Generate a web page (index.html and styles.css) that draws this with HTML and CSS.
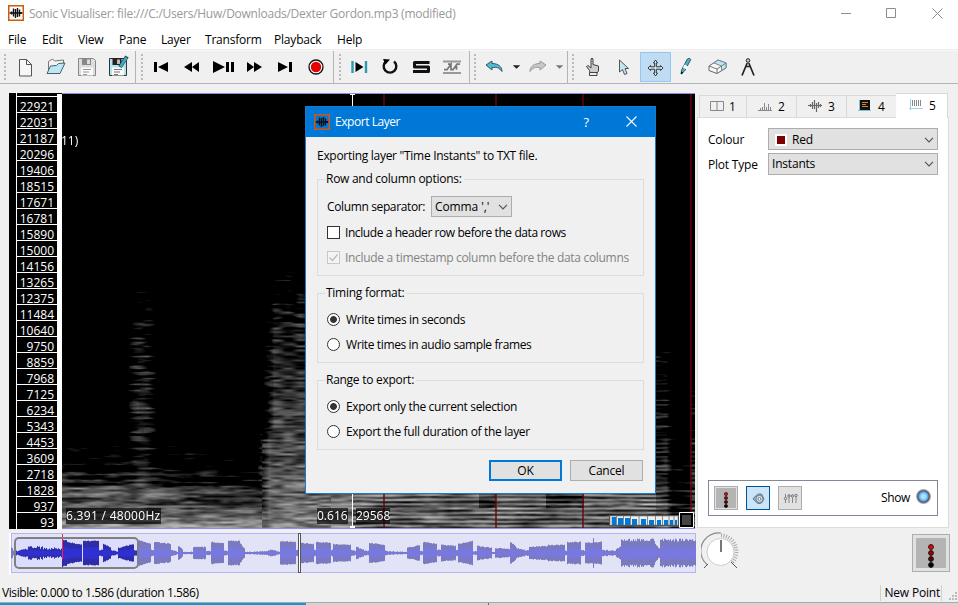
FILE: index.html
```html
<!DOCTYPE html>
<html lang="en">
<head>
<meta charset="utf-8">
<title>Sonic Visualiser</title>
<link rel="stylesheet" href="styles.css">
</head>
<body>
<svg width="0" height="0" class="defs">
  <symbol id="logo" viewBox="0 0 16 16"><path d="M1.500 8h13M3.500 6.500v3M5.500 3.500v8M7.500 4v9M9.500 3v9M11.500 4.500v7M13 7v2" stroke="#111" stroke-width="1.400" fill="none"/><rect x=".75" y=".75" width="14.500" height="14.500" fill="none" stroke="#d4570c" stroke-width="1.500"/></symbol>
  <symbol id="chev" viewBox="0 0 10 6"><path d="M1 .8l4 4 4-4" fill="none" stroke="#555" stroke-width="1.200"/></symbol>
  <symbol id="lights" viewBox="0 0 30 30"><rect width="30" height="30" rx="1" fill="#b4b4b4"/><g stroke="#111"><circle cx="15" cy="9" r="2.400" fill="#f00"/><circle cx="15" cy="15" r="2.400" fill="#a00"/><circle cx="15" cy="21" r="2.400" fill="#600"/><circle cx="15" cy="27" r="2.400" fill="#000"/></g></symbol>
</svg>
<header class="titlebar">
  <svg class="logo"><use href="#logo"/></svg>
  <span class="title">Sonic Visualiser: file:///C:/Users/Huw/Downloads/Dexter Gordon.mp3 (modified)</span>
  <svg class="winbtns" viewBox="0 0 102 12"><path d="M0 6.500h10M45.500 1.500h9v9h-9zM91.500 1.500l10 10M101.500 1.500l-10 10" fill="none" stroke="#8c8c8c"/></svg>
</header>
<nav class="menu"><span>File</span><span>Edit</span><span>View</span><span>Pane</span><span>Layer</span><span>Transform</span><span>Playback</span><span>Help</span></nav>
<div class="toolbar">
  <div class="group g1"><i class="grip"></i>
    <svg class="tool" viewBox="0 0 31 30"><path d="M10.500 7.500h7l5 5v11.500h-12z" fill="#f7f7f7" stroke="#555"/><path d="M17.500 7.500v5h5" fill="none" stroke="#555"/></svg>
    <svg class="tool" viewBox="0 0 31 30"><path d="M8.500 22V9.500l4-2.500 2 2 9-1v6" fill="#f4f4f4" stroke="#777"/><path d="M7 21.500l3.500-7.500 6-.5 2-2 6.500-.5-5 10.500z" fill="#bfe6f2" stroke="#3c6470"/></svg>
    <svg class="tool" viewBox="0 0 31 30"><path d="M7.500 6.500h15l2 2v15h-17z" fill="#ddd" stroke="#888"/><path d="M11 6h9v7h-9z" fill="#888"/><path d="M16 7.500h3V12h-3z" fill="#ddd"/><path d="M10 15.500h12v8H10z" fill="#fafafa"/><path d="M12 17.500h8M12 20h6M12 22.500h4" stroke="#999"/></svg>
    <svg class="tool" viewBox="0 0 31 30"><path d="M7.500 6.500h15l2 2v15h-17z" fill="#b5e2ef" stroke="#333"/><path d="M10.500 6h9v7h-9z" fill="#222"/><path d="M15 7.500h3V12h-3z" fill="#bbb"/><path d="M10 15.500h12v8H10z" fill="#fafafa"/><path d="M12 17.500h8M12 20h6M12 22.500h4" stroke="#777"/><path d="M18 15l7-10.500" stroke="#345" stroke-width="4"/><path d="M18.500 14.500l6-9" stroke="#39aecb" stroke-width="2.500"/></svg>
  </div>
  <div class="group g2"><i class="grip"></i>
    <svg class="tool" viewBox="0 0 31 30"><path d="M8 10h3v10H8zM22 10v10l-10-5z"/></svg>
    <svg class="tool" viewBox="0 0 31 30"><path d="M15 10v10l-8-5zM22 10v10l-7-5z"/></svg>
    <svg class="tool" viewBox="0 0 31 30"><path d="M5 9v12l12-6zM18 10h3v10h-3zM23 10h3v10h-3z"/></svg>
    <svg class="tool" viewBox="0 0 31 30"><path d="M8 10v10l7-5zM15 10v10l8-5z"/></svg>
    <svg class="tool" viewBox="0 0 31 30"><path d="M8 10v10l10-5zM19 10h3v10h-3z"/></svg>
    <svg class="tool" viewBox="0 0 31 30"><circle cx="15" cy="15" r="7" fill="#fff" stroke="#111" stroke-width="1.300"/><circle cx="15" cy="15" r="5.200" fill="#e60000"/></svg>
  </div>
  <div class="group g3"><i class="grip"></i>
    <svg class="tool" viewBox="0 0 31 30"><path d="M8.500 9v12M22 9v12" stroke="#2d9ab5" stroke-width="2.400"/><path d="M11.500 10v10l8-5z"/></svg>
    <svg class="tool" viewBox="0 0 31 30"><path d="M19 9.500a6.300 6.300 0 1 1-8 0" fill="none" stroke="#111" stroke-width="2.400"/><path d="M8 7l7 .5-4.500 5z"/></svg>
    <svg class="tool" viewBox="0 0 31 30"><path d="M23.500 10.500H8.500v4.500h14v4.500H7" fill="none" stroke="#111" stroke-width="3" stroke-linejoin="round"/></svg>
    <svg class="tool" viewBox="0 0 31 30"><path d="M6 9.500h18M6 21h18" stroke="#999" stroke-width="2"/><path d="M7 17.700h3l4-5.500v5.500h2l4-5.500h3M11 12.200h3M19.500 12.200v5.500" fill="none" stroke="#777" stroke-width="1.700"/></svg>
  </div>
  <div class="group g4"><i class="grip"></i>
    <svg class="tool" viewBox="0 0 31 30"><path d="M7 13l6-4v2.500c6 0 10 3 10 8-3-4-5-4.500-10-4v2.500z" fill="#4dbbd5" stroke="#35565f"/></svg>
    <svg class="drop" viewBox="0 0 14 30"><path d="M3 13h8l-4 4z" fill="#222"/></svg>
    <svg class="tool" viewBox="0 0 31 30"><path d="M23 13l-6-4v2.500c-6 0-10 3-10 8 3-4 5-4.500 10-4v2.500z" fill="#c8c8c8" stroke="#999"/></svg>
    <svg class="drop" viewBox="0 0 14 30"><path d="M2 13h8l-4 4z" fill="#777"/></svg>
  </div>
  <div class="group g5"><i class="grip"></i>
    <svg class="tool" viewBox="0 0 31 30"><path d="M11.500 18.500l-3-4 1.500-1 3 2.500V7q1-2 2 0v5.500l5.500 1.500v5l-1.500 2h-7z" fill="#ccc" stroke="#444"/><path d="M11.500 20.500h7.500v3h-7.500z" fill="#eee" stroke="#444"/></svg>
    <svg class="tool" viewBox="0 0 31 30"><path d="M10.500 8v12l3-2.500 2 5 2.500-1-2-5h3.500z" fill="#bfe6f2" stroke="#555"/></svg>
    <svg class="tool active" viewBox="0 0 31 30"><path d="M15.500 8l2 3h-1.200v3.800h4.200v-1.300l2.500 2.500-2.500 2.500v-1.300h-4.200V21h1.200l-2 3-2-3h1.200v-3.800h-4.200v1.300L8 16l2.500-2.500v1.300h4.200V11h-1.200z" fill="#d5eef8" stroke="#333"/></svg>
    <svg class="tool" viewBox="0 0 31 30"><path d="M10 22l.6-4 5.700-11q2-1.500 3.500.5l-6 11.200z" fill="#46b4d0" stroke="#456"/><path d="M13.500 12.500l3.500 2-1.500 3-3.500-2z" fill="#fff"/><path d="M10 22.500l.5-3 2 1.200z"/></svg>
    <svg class="tool" viewBox="0 0 31 30"><path d="M7 14l9-6 8 3v5l-9 5.500-8-3z" fill="#f8f8f8" stroke="#666"/><path d="M12 11l4-3 8 3v5l-4.500 2.500v-4.500z" fill="#bfe6f2" stroke="#789"/><path d="M7 14l8 3 9-6M15 17v4" fill="none" stroke="#777"/></svg>
    <svg class="tool" viewBox="0 0 31 30"><circle cx="15" cy="8.500" r="1.800" fill="#ccc" stroke="#222"/><path d="M14.200 11L9 23.500M15.800 11L21 23.500M12.500 14.500h5" fill="none" stroke="#222" stroke-width="1.700"/></svg>
  </div>
</div>
<main class="work">
  <section class="left">
    <div class="pane">
      <div class="gutter"></div>
      <div class="scale" id="scale"></div>
      <div class="strip"></div>
      <div class="spectro">
        <canvas id="spec" width="633" height="436"></canvas>
        <span class="lbl paren">11)</span>
        <span class="lbl hz">6.391 / 48000Hz</span><span class="lbl t1">0.616</span><span class="lbl t2">29568</span>
        <svg class="thumb" viewBox="0 0 86 16"><rect x=".5" y="3.500" width="69" height="10" fill="#ccc" stroke="#555"/><path d="M3 5h65v7H3z" fill="#eee"/><path d="M3 5h4v8H3zM9 6h5v7H9zM16 6h5v7h-5zM23 7h5v6h-5zM32 7h5v6h-5zM40 8h5v5h-5zM48 8h4v5h-4zM55 8h4v5h-4zM61 8h3v5h-3zM66 8h2v5h-2z" fill="#0078d7"/><path d="M7.500 4v9M14.500 4v9M21.500 4v9M30 4v9M38.500 4v9M46.500 4v9M53.500 4v9M60 4v9M65 4v9" stroke="#888"/><path d="M70.500.5h14v15h-14z" fill="none" stroke="#fff"/><path d="M72 2h11v12H72z" fill="#444" stroke="#000" stroke-width="2"/></svg>
      </div>
    </div>
    <div class="overview"><canvas id="wave" width="687" height="42"></canvas><i class="viewbox"></i><i class="playpos"></i></div>
  </section>
  <aside class="side">
    <div class="tabs">
      <div class="tab"><svg viewBox="0 0 14 12"><path d="M.5 1.500h13v9H.5zM7 1.500v9" fill="none" stroke="#888"/></svg>1</div>
      <div class="tab"><svg viewBox="0 0 14 12"><path d="M0 10.500h14M2.500 8v2M4.500 7v3M6.500 3v7M8.500 7v3M10.500 4v6M12.500 7v3" stroke="#888"/></svg>2</div>
      <div class="tab"><svg viewBox="0 0 14 12"><path d="M0 5.500h14M2.500 4v3M4.500 2v7M6.500 0v9M8.500 3v9M10.500 2v6M12.500 4v3" stroke="#666" stroke-width="1.200"/></svg>3</div>
      <div class="tab"><svg viewBox="0 0 14 12"><path d="M1 0h11v10H1z" fill="#111"/><path d="M4 2.500h6M4 4.500h4M4 6.500h6" stroke="#d8832c"/><path d="M1.500 0v11M0 10.500h13" stroke="#7ac4dc"/></svg>4</div>
      <div class="tab on"><svg viewBox="0 0 14 12"><path d="M3.500 1v6M5.500 1v6M7.500 1v6M9.500 1v6M11.500 1v6" stroke="#888"/><path d="M1.500 0v11M0 9.500h14" stroke="#9cd4e6"/></svg>5</div>
    </div>
    <div class="panel">
      <div class="field"><span>Colour</span><div class="combo first"><i class="swatch"></i>Red<svg class="chev"><use href="#chev"/></svg></div></div>
      <div class="field"><span class="pt">Plot Type</span><div class="combo">Instants<svg class="chev"><use href="#chev"/></svg></div></div>
      <div class="playbox">
        <div class="pb"><svg viewBox="0 0 30 30"><use href="#lights"/></svg></div>
        <div class="pb sel"><svg viewBox="0 0 20 20"><path d="M5 11l2.500-3 3-2h3l2.500 5-2.500 4-3.500.5z" fill="#9db8c6" stroke="#678"/><circle cx="11.500" cy="11" r="3.600" fill="#dbe9f0" stroke="#678"/><circle cx="11.500" cy="11" r="1.500" fill="#fff" stroke="#678"/></svg></div>
        <div class="pb"><svg viewBox="0 0 20 20"><path d="M5.500 6v9M9 6v9M12.500 6v9M16 6v9" stroke="#888"/><g fill="#ddd" stroke="#777"><circle cx="5.500" cy="10.500" r="1.200"/><circle cx="9" cy="8" r="1.200"/><circle cx="12.500" cy="8" r="1.200"/><circle cx="16" cy="7.500" r="1.200"/></g></svg></div>
        <span class="show">Show</span><i class="led"></i>
      </div>
    </div>
    <div class="controls">
      <svg class="dial" viewBox="0 0 40 40"><path d="M6 32.500A18 18 0 0 1 20 1" fill="none" stroke="#888" stroke-width="1.200"/><path d="M20 3.500A16 16 0 0 1 31 30.500" fill="none" stroke="#aaa" stroke-width="4" stroke-dasharray="1 1.500"/><path d="M3 36l4-4M36 36l-6-6" stroke="#555"/><circle cx="19.500" cy="20" r="13.500" fill="#fff" stroke="#ccc"/><path d="M20 8v12" stroke="#777" stroke-width="2"/></svg>
      <div class="mixer"><svg viewBox="0 0 30 30"><use href="#lights"/></svg></div>
    </div>
  </aside>
</main>
<footer class="status"><span class="vis">Visible: 0.000 to 1.586 (duration 1.586)</span><span class="np">New Point</span><svg class="size" viewBox="0 0 9 9"><path d="M6 0h2v2H6zM3 3h2v2H3zM6 3h2v2H6zM0 6h2v2H0zM3 6h2v2H3zM6 6h2v2H6z" fill="#bbb"/></svg></footer>
<div class="under"><i class="blue"></i><i class="tick"></i></div>

<div class="dialog">
  <div class="dtitle"><svg class="logo"><use href="#logo"/></svg><span>Export Layer</span><b>?</b><svg class="x" viewBox="0 0 11 11"><path d="M.5.5l10 10M10.500.5l-10 10" stroke="#fff" stroke-width="1.100"/></svg></div>
  <p class="intro">Exporting layer "Time Instants" to TXT file.</p>
  <fieldset class="f1"><legend class="lg1">Row and column options:</legend>
    <div class="sep"><span>Column separator:</span><div class="combo">Comma ','<svg class="chev"><use href="#chev"/></svg></div></div>
    <label class="chk c1"><i></i><span>Include a header row before the data rows</span></label>
    <label class="chk off c2"><i><svg viewBox="0 0 11 11"><path d="M1.500 5.500l3 3 5-6" fill="none" stroke="#bbb" stroke-width="1.300"/></svg></i><span>Include a timestamp column before the data columns</span></label>
  </fieldset>
  <fieldset class="f2"><legend>Timing format:</legend>
    <label class="rad on"><i></i><span>Write times in seconds</span></label><label class="rad"><i></i><span class="r2">Write times in audio sample frames</span></label>
  </fieldset>
  <fieldset class="f3"><legend>Range to export:</legend>
    <label class="rad on"><i></i><span>Export only the current selection</span></label><label class="rad"><i></i><span>Export the full duration of the layer</span></label>
  </fieldset>
  <div class="buttons"><div class="btn ok">OK</div><div class="btn">Cancel</div></div>
</div>
<script src="app.js"></script>
</body>
</html>
```
FILE: styles.css
```css
* { box-sizing: border-box; }
body { margin: 0; width: 958px; height: 605px; overflow: hidden; display: flex; flex-direction: column; background: #f0f0f0; font: 12px/16px "Open Sans", "Noto Sans", sans-serif; letter-spacing: -0.2px; color: #000; white-space: nowrap; }
i { display: block; font-style: normal; }
svg, canvas { display: block; flex: none; }
.defs { position: absolute; }
.titlebar { height: 29px; flex: none; background: #fff; display: flex; align-items: center; padding: 0 15px 3px 8px; color: #999; }
.logo { width: 16px; height: 16px; }
.title { margin: 2px 0 0 5px; flex: 1; letter-spacing: -.255px; }
.winbtns { width: 102px; height: 12px; }
.menu { height: 21px; flex: none; background: #fff; border-bottom: 1px solid #ececec; padding: 3px 0 0 8px; display: grid; grid-template-columns: 34px 36px 41px 42px 44px 69px 63px auto; }
.toolbar { height: 34px; flex: none; display: flex; border-bottom: 1px solid #b4b4b4; border-top: 1px solid #f8f8f8; }
.group { display: flex; align-items: center; border-right: 1px solid #b4b4b4; }
.g1 { width: 136px; padding-left: 4px; }
.g2 { width: 198px; padding-left: 5px; }
.g3 { width: 136px; padding-left: 5px; }
.g4 { width: 98px; padding-left: 4px; }
.g5 { flex: 1; border: 0; padding-left: 4px; }
.grip { width: 2px; height: 27px; margin-right: 3px; background: repeating-linear-gradient(#bbb 0 2px, transparent 2px 4px); }
.g5 .grip { margin-right: 4px; }
.tool { width: 31px; height: 30px; }
.drop { width: 13px; height: 30px; }
.active { background: #c0dcf3; outline: 1px solid #90c8f6; outline-offset: -1px; }
.work { display: flex; height: 500px; flex: none; padding: 9px 0 0 9px; }
.left { width: 688px; }
.pane { display: flex; height: 436px; background: #000; width: 686px; }
.gutter { width: 7px; }
.scale { width: 41px; border-left: 1px solid #fff; padding-top: 3px; color: #fff; letter-spacing: 0; }
.scale div { height: 16px; border-top: 1px solid #fff; text-align: right; padding-right: 3px; line-height: 19px; }
.strip { width: 5px; background: #fff; margin-top: 1px; }
.spectro { position: relative; width: 633px; border-top: 1px solid #8c8cf0; border-bottom: 1px solid #8c8cf0; overflow: hidden; }
.lbl { position: absolute; color: #fff; background: rgba(0,0,0,.65); line-height: 16px; letter-spacing: 0; }
.paren { left: -1px; top: 39px; }
.hz { left: 4px; top: 414px; letter-spacing: .3px; }
.t1 { left: 255px; top: 414px; }
.t2 { left: 294px; top: 414px; }
.thumb { position: absolute; left: 547px; top: 418px; width: 86px; height: 16px; }
.overview { position: relative; margin-top: 4px; width: 688px; height: 42px; }
.viewbox { position: absolute; left: 5px; top: 4px; width: 125px; height: 32px; border: 2px solid #808080; border-radius: 5px; }
.playpos { position: absolute; left: 289px; top: 0; width: 3px; height: 40px; border: 1px solid #555; background: #fff; }
.side { width: 252px; }
.tabs { display: flex; height: 24px; align-items: flex-end; padding-left: 2px; }
.tab { width: 50px; height: 22px; border: 1px solid #d9d9d9; border-left-width: 0; border-bottom: 0; display: flex; align-items: center; gap: 6px; padding: 0 0 0 11px; }
.tab:first-child { border-left-width: 1px; width: 48px; padding-left: 10px; gap: 5px; }
.tab svg { width: 14px; height: 12px; margin-top: -1px; }
.tab.on { width: 52px; height: 25px; background: #fff; padding: 0 0 1px 13px; z-index: 1; margin: 0 0 -1px -1px; }
.tab.on svg { margin-top: -2px; }
.panel { height: 411px; background: #fff; border: 1px solid #dcdcdc; padding: 10px 10px 11px; display: flex; flex-direction: column; gap: 3px; }
.field { display: flex; height: 22px; align-items: center; }
.field > span { width: 60px; margin-top: 2px; }
.combo { display: flex; align-items: center; background: #e1e1e1; border: 1px solid #adadad; height: 22px; padding: 0 3px; }
.combo.first { padding-top: 1px; }
.field .combo { flex: 1; }
.chev { width: 10px; height: 6px; margin-left: auto; }
.swatch { width: 12px; height: 12px; background: #7f0000; border: 2px solid #fff; margin: 0 5px 0 3px; outline: 1px solid #fff; outline-offset: -1px; }
.playbox { margin-top: auto; height: 36px; border: 1px solid #82879a; display: flex; align-items: center; padding: 0 6px 0 5px; gap: 8px; }
.pb { width: 24px; height: 24px; border: 1px solid #adadad; background: #e1e1e1; padding: 1px; }
.pb.sel { border-color: #005499; background: #cce4f7; }
.pb svg { width: 20px; height: 20px; }
.show { margin-left: auto; letter-spacing: -.35px; }
.led { width: 15px; height: 15px; margin: -3px 0 0 -2px; border-radius: 50%; background: radial-gradient(circle at 50% 50%, #aee0ff 0 2px, #4aabf5 4.500px, #556 5.500px, #bbb 7.500px); }
.controls { display: flex; justify-content: space-between; padding: 4px 0 0 4px; align-items: flex-start; margin-right: -1px; }
.dial { width: 40px; height: 40px; }
.mixer { width: 38px; height: 38px; margin-top: 2px; border: 1px solid #adadad; background: #e1e1e1; padding: 3px; }
.mixer svg { width: 30px; height: 30px; }
.status { height: 18px; flex: none; display: flex; padding: 0 0 0 2px; align-items: center; }
.vis { letter-spacing: -.42px; }
.np { margin-left: auto; border-left: 1px solid #d0d0d0; border-right: 1px solid #d0d0d0; padding: 0 1px 0 4px; }
.size { width: 9px; height: 9px; margin: 6px 0 0 7px; }
.under { height: 3px; flex: none; background: #d4d4d4; border-top: 1px solid #a8a8a8; display: flex; }
.blue { width: 306px; background: #0a9ad8; }
.tick { width: 1px; margin-left: 182px; background: #1685bb; }

.dialog { position: absolute; left: 305px; top: 106px; width: 351px; height: 388px; border: 1px solid #1979ca; background: #f0f0f0; display: flex; flex-direction: column; }
.dtitle { height: 30px; background: #0078d7; color: #fff; display: flex; align-items: center; padding: 0 18px 0 8px; }
.dtitle span { margin: -1px 0 0 5px; flex: 1; letter-spacing: -.45px; }
.dtitle b { font-weight: 400; font-size: 13px; margin: -1px 37px 0 0; }
.dtitle .x { width: 11px; height: 11px; margin-top: -2px; }
.intro { margin: 11px 0 0 11px; letter-spacing: -.29px; }
fieldset { margin: 7px 11px 0; padding: 0; border: 1px solid #dcdcdc; width: 327px; min-width: 0; }
legend { margin-left: 7px; padding: 0 2px 0 1px; height: 16px; letter-spacing: -.27px; }
.f1 { height: 105px; }
.f2, .f3 { height: 78px; margin-top: 9px; }
.sep { display: flex; align-items: center; padding: 9px 0 0 9px; }
.sep span { width: 104px; letter-spacing: -.37px; }
.sep .combo { width: 81px; height: 21px; letter-spacing: -.1px; }
.chk, .rad { display: flex; align-items: center; height: 25px; padding-left: 9px; letter-spacing: -.34px; }
.chk { gap: 5px; }
.c1 { margin-top: 3px; letter-spacing: -.42px; }
.c2 { letter-spacing: -.31px; }
.chk i { width: 13px; height: 13px; border: 1px solid #333; background: #fff; }
.off { color: #838383; }
.off i { border-color: #c8c8c8; background: #f4f4f4; }
.off svg { width: 11px; height: 11px; }
.rad { gap: 6px; }
.r2 { letter-spacing: -.38px; }
legend + .rad { margin-top: 6px; }
.rad i { width: 13px; height: 13px; border: 1px solid #333; border-radius: 50%; background: #fff; }
.rad.on i { background: radial-gradient(circle, #333 0 3px, #fff 3.800px); }
.buttons { display: flex; justify-content: flex-end; gap: 8px; margin: 10px 12px 0 0; }
.btn { width: 73px; height: 21px; border: 1px solid #adadad; background: #e1e1e1; text-align: center; line-height: 20px; }
.ok { border: 2px solid #0078d7; line-height: 18px; }
```
FILE: app.js
```js
// Frequency scale
[22921,22031,21187,20296,19406,18515,17671,16781,15890,15000,14156,13265,12375,11484,10640,9750,8859,7968,7125,6234,5343,4453,3609,2718,1828,937,93].forEach(function (f) {
  var d = document.createElement('div');
  d.textContent = f;
  document.getElementById('scale').appendChild(d);
});

function hash(x, y) {
  var h = Math.imul(x, 374761393) + Math.imul(y, 668265263) | 0;
  h = Math.imul(h ^ (h >>> 13), 1274126177);
  return ((h ^ (h >>> 16)) >>> 0) / 4294967295;
}
function noise(x, y) {
  var i = Math.floor(x), j = Math.floor(y), u = x - i, v = y - j;
  u = u * u * (3 - 2 * u);
  var a = hash(i, j) * (1 - u) + hash(i + 1, j) * u;
  var b = hash(i, j + 1) * (1 - u) + hash(i + 1, j + 1) * u;
  return a * (1 - v) + b * v;
}
// Piecewise linear lookup over [position, value] pairs
function ramp(p, t) {
  if (t <= p[0][0]) return p[0][1];
  for (var k = 1; k < p.length; k++) {
    if (t < p[k][0]) return p[k-1][1] + (p[k][1] - p[k-1][1]) * (t - p[k-1][0]) / (p[k][0] - p[k-1][0]);
  }
  return p[p.length - 1][1];
}
var OX = 62, OY = 94;
var quiet = [[430,-.5],[448,-.14],[466,-.08],[472,.08],[484,.06],[488,.32],[493,.4],[498,.25],[512,.36],[520,.5],[528,.58]];
var pulse = [[245,-.4],[290,-.16],[325,0],[360,.09],[400,.12],[440,.1],[470,.17],[490,.32],[528,.5]];
var onset = [[255,-.35],[290,-.08],[320,.08],[370,.17],[420,.25],[470,.34],[500,.42],[528,.52]];
var tail = [[330,-.5],[355,-.05],[450,.08],[470,.14],[500,.28],[528,.42]];
var c = document.getElementById('spec').getContext('2d');
var img = c.createImageData(633, 436);
for (var py = 0; py < 436; py++) for (var px = 0; px < 633; px++) {
  var x = px + OX, y = py + OY, b, n;
  n = noise(x / (x < 262 ? 19 : x > 330 ? 24 : 12), y / 2) * .74 + noise(x / 7 + 90, y / 1.6 + 50) * .26;
  var edge = y > 430 ? 266 : 271;
  b = -1;
  if (x < 280) {
    var w = Math.max(0, 1 - Math.abs(x - 142) / 14);
    b = ramp(quiet, y) - Math.max(0, (x - 150) / 110) * (y < 487 ? .2 : y < 510 ? .16 : .05);
    if (w > 0) b = Math.max(b, ramp(pulse, y) - (1 - w) * (1 - w) * .3);
  }
  if (x >= 258 && x < 656) {
    b = Math.max(b, ramp(onset, y) - Math.max(0, edge + 3 - x) * .04);
    if (x > 352) {
      b = y < 480 ? -1 : .38 + Math.sin(y * 1.45) * .15;
      if (y < 508 && (x > 478 && x < 496 || x > 545 && x < 584)) b -= .2;
    }
  } else if (x >= 656) {
    b = ramp(tail, y) + Math.sin(y * 1.45) * .11;
    b -= Math.max(0, Math.min(.3, (x - 666) * .05));
    if (x > 689 && y > 390) b += .2;
  }
  var g = Math.max(0, Math.min(.74, b + (n - .5) * (b < .1 ? .72 : .54))) * 255;
  var o = (py * 633 + px) * 4;
  img.data[o] = img.data[o+1] = img.data[o+2] = g;
  img.data[o+3] = 255;
}
c.putImageData(img, 0, 0);
c.fillStyle = 'rgba(110,0,8,.7)';
[383, 495, 582, 690].forEach(function (m) { c.fillRect(m - OX, 0, 2, 436); });
c.fillStyle = '#fff';
c.fillRect(352 - OX, 0, 1, 436);
c.fillRect(350 - OX, 432, 5, 3);
c.fillRect(350 - OX, 0, 5, 1);

// Overview: [start, end, peak at start, peak at end]
var seg = [[11,13,6,3],[13,17,2,3],[17,28,2,5],[28,62,6,4],[62,67,14,12],[67,82,11,8],[83,99,12,12],[99,103,3,3],[103,111,9,5],[111,118,3,1],[118,134,5,9],[134,139,3,2],[139,151,13,9],[151,154,3,3],[154,171,11,9],[171,178,3,1],[178,183,7,3],[183,193,1,1],[193,206,6,6],[206,211,2,2],[211,224,11,10],[224,228,2,2],[228,240,12,12],[240,245,10,3],[245,268,1,2],[268,276,3,3],[276,280,2,1],[280,296,12,11],[296,301,3,2],[301,314,10,9],[314,316,3,3],[316,331,11,10],[331,333,3,3],[333,351,9,8],[351,356,3,2],[356,364,6,3],[364,369,2,2],[369,385,10,8],[385,407,2,1],[407,420,5,8],[420,423,2,2],[423,437,11,9],[437,441,3,3],[441,456,8,7],[456,458,3,3],[458,473,9,12],[473,477,2,2],[477,492,7,5],[492,495,1,1],[495,510,5,4],[510,516,11,6],[516,529,5,2],[529,548,6,7],[548,565,8,8],[565,567,2,2],[567,581,11,11],[581,585,3,2],[585,602,10,11],[602,616,3,2],[616,621,4,8],[621,655,13,13],[655,660,8,3],[660,697,13,13]];
var wv = document.getElementById('wave').getContext('2d');
wv.fillStyle = '#fff'; wv.fillRect(0, 0, 2, 42);
wv.fillStyle = '#e3e3f7'; wv.fillRect(2, 0, 685, 40);
wv.strokeStyle = '#b4b4f5'; wv.strokeRect(2.5, .5, 684, 39);
wv.fillStyle = '#dcdcff'; wv.fillRect(6, 6, 123, 29);
seg.forEach(function (s) {
  for (var x = s[0]; x < s[1]; x++) {
    var a = s[2] + (s[3] - s[2]) * (x - s[0]) / (s[1] - s[0]);
    a += (hash(x, 7) - .5) * (x > 616 || x < 62 && x > 20 ? 3 : 1);
    if (x === 593) a = 15;
    a = Math.max(1, a);
    var inView = x > 14 && x < 138, r = Math.max(.7, a * .48);
    wv.fillStyle = inView ? '#2d2da6' : '#7a7abf';
    wv.fillRect(x - 9, 20 - a, 1, a * 2);
    wv.fillStyle = inView ? '#3030d2' : '#7878de';
    wv.fillRect(x - 9, 20 - r, 1, r * 2);
  }
});
wv.fillStyle = '#ff2050'; wv.fillRect(53, 1, 1, 25);
```
